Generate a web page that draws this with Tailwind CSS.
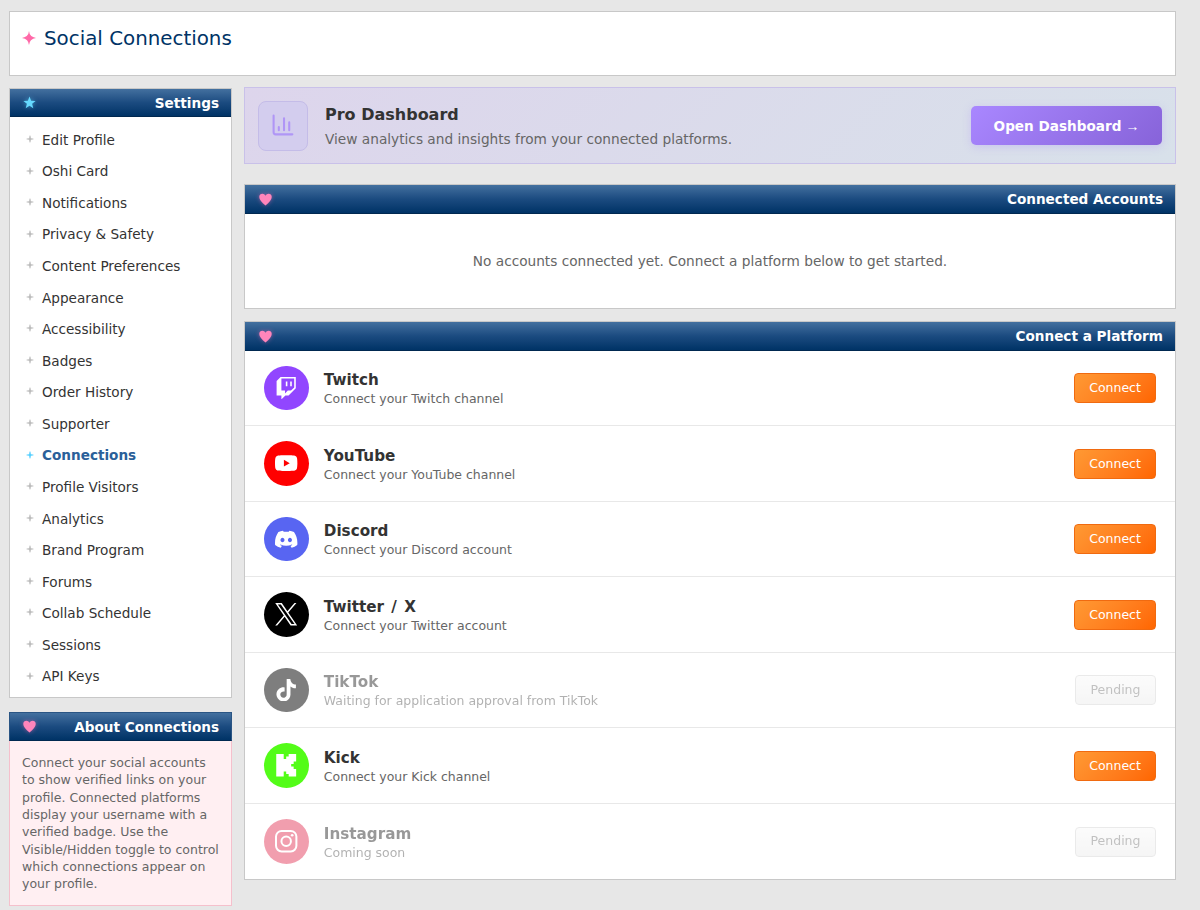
<!DOCTYPE html>
<html lang="en">
<head>
  <meta charset="UTF-8" />
  <title>Social Connections</title>
  <meta name="viewport" content="width=device-width, initial-scale=1.0" />
  <script src="https://cdn.jsdelivr.net/npm/@tailwindcss/browser@4"></script>
</head>
<body class="h-[910px] overflow-hidden bg-[#e7e7e7] pl-[9px] pr-6 pt-[11px] font-['DejaVu_Sans',Verdana,sans-serif] text-[#333]">
  <header class="flex h-[65px] gap-2 border border-[#c8c8c8] bg-white pl-3 pt-[11px]">
    <svg class="mt-2 h-[14px] w-[14px] fill-[#ff69a8]" viewBox="0 0 24 24"><path d="M12 0Q12.800 10 24 12Q12.800 14 12 24Q11.200 14 0 12Q11.200 10 12 0Z"/></svg>
    <h1 class="pt-px text-[19.850px] leading-[30px] text-[#003366]">Social Connections</h1>
  </header>

  <div class="mt-3 flex gap-3">
    <aside class="w-[223px] shrink-0">
      <section class="h-[610px] border border-[#c8c8c8] bg-white">
        <div class="flex h-7 items-center justify-between border-b border-[#002850] bg-linear-to-b from-[#43709f] via-[#1b4b80] to-[#003366] px-3">
          <svg class="ml-px h-[13px] w-[13px] fill-[#66d9ff] drop-shadow-[0_0_2px_rgba(102,217,255,0.5)]" viewBox="0 0 24 24"><path d="M12 1l3 7.800 8.300.4-6.500 5.200 2.200 8.100-7-4.600-7 4.600 2.200-8.100L.7 9.200 9 8.800z"/></svg>
          <h2 class="pt-px text-[13.600px] font-bold text-white">Settings</h2>
        </div>
        <nav id="settingsNav" class="pt-[7.200px]"></nav>
      </section>

      <section class="mt-[14px] h-[194px] border border-[#f5c0cc] bg-[#ffeff2]">
        <div class="-mx-px -mt-px flex h-[29px] items-center justify-between border border-[#2a5584] border-b-[#002850] bg-linear-to-b from-[#43709f] via-[#1b4b80] to-[#003366] px-3">
          <svg class="ml-px h-[13px] w-[13px] fill-[#ff85bb] drop-shadow-[0_0_2px_rgba(255,105,180,0.5)]" viewBox="0 0 24 24"><path d="M12 23C5 17 .5 13 .5 7.500 .5 0 9.500-.5 12 5 14.500-.5 23.500 0 23.500 7.500 23.500 13 19 17 12 23z"/></svg>
          <h2 class="pt-px text-[13.600px] font-bold text-white">About Connections</h2>
        </div>
        <p class="px-3 pt-[13px] text-[12.500px] leading-[17.350px] whitespace-nowrap text-[#666]">Connect your social accounts<br>to show verified links on your<br>profile. Connected platforms<br>display your username with a<br>verified badge. Use the<br>Visible/Hidden toggle to control<br>which connections appear on<br>your profile.</p>
      </section>
    </aside>

    <main class="w-[932px] shrink-0">
      <section class="-mt-px flex h-[77px] items-center border border-[#c9c1e9] bg-linear-135 from-[#ddd5ec] to-[#d8e1ea] px-[13px]">
        <div class="flex h-[50px] w-[50px] items-center justify-center rounded-lg border border-[#c4bce8] bg-[#d3cdee]">
          <svg class="h-[25px] w-[25px] fill-none stroke-[#b096f6] stroke-2" viewBox="0 0 24 24" stroke-linecap="round" stroke-linejoin="round"><path d="M2.500 2.500v16a2 2 0 0 0 2 2h16M7.500 16.500v-3M12.500 16.500V5M17.500 16.500V9"/></svg>
        </div>
        <div class="ml-[17px] flex-1 pt-[3px]">
          <h2 class="text-[16px] leading-6 font-bold">Pro Dashboard</h2>
          <p class="text-[13.700px] leading-[25px] text-[#666]">View analytics and insights from your connected platforms.</p>
        </div>
        <button class="flex h-[39px] w-[191px] items-center justify-center gap-1 rounded-[5px] bg-linear-135 from-[#a987ff] to-[#8763d9] text-[13.600px] font-bold text-white shadow-[0_2px_8px_rgba(167,139,250,0.3)]"><span class="pt-px">Open Dashboard</span><span class="pt-[2px] font-['Liberation_Sans',sans-serif] text-[14px] font-normal">→</span></button>
      </section>

      <section class="mt-5 h-[125px] border border-[#c8c8c8] bg-white">
        <div class="flex h-[29px] items-center justify-between border-b border-[#002850] bg-linear-to-b from-[#43709f] via-[#1b4b80] to-[#003366] px-3">
          <svg class="ml-[2px] h-[13px] w-[13px] fill-[#ff85bb] drop-shadow-[0_0_2px_rgba(255,105,180,0.5)]" viewBox="0 0 24 24"><path d="M12 23C5 17 .5 13 .5 7.500 .5 0 9.500-.5 12 5 14.500-.5 23.500 0 23.500 7.500 23.500 13 19 17 12 23z"/></svg>
          <h2 class="text-[13.600px] font-bold text-white">Connected Accounts</h2>
        </div>
        <p class="pt-[35px] text-center text-[13.680px] leading-6 text-[#666]">No accounts connected yet. Connect a platform below to get started.</p>
      </section>

      <section class="mt-3 h-[559px] border border-[#c8c8c8] bg-white">
        <div class="flex h-[29px] items-center justify-between border-b border-[#002850] bg-linear-to-b from-[#43709f] via-[#1b4b80] to-[#003366] px-3">
          <svg class="ml-[2px] h-[13px] w-[13px] fill-[#ff85bb] drop-shadow-[0_0_2px_rgba(255,105,180,0.5)]" viewBox="0 0 24 24"><path d="M12 23C5 17 .5 13 .5 7.500 .5 0 9.500-.5 12 5 14.500-.5 23.500 0 23.500 7.500 23.500 13 19 17 12 23z"/></svg>
          <h2 class="text-[13.600px] font-bold text-white">Connect a Platform</h2>
        </div>
        <div id="platformList" class="-mt-[0.300px]"></div>
      </section>
    </main>
  </div>

  <script>
    const navItems = [
      'Edit Profile', 'Oshi Card', 'Notifications', 'Privacy &amp; Safety', 'Content Preferences',
      'Appearance', 'Accessibility', 'Badges', 'Order History', 'Supporter', 'Connections',
      'Profile Visitors', 'Analytics', 'Brand Program', 'Forums', 'Collab Schedule', 'Sessions', 'API Keys'
    ];

    document.getElementById('settingsNav').innerHTML = navItems.map(item => {
      const active = item === 'Connections';
      return `
        <a class="flex h-[31.570px] items-center gap-2 pl-4 text-[13.600px] ${active ? 'font-bold text-[#2a6099]' : 'text-[#333]'}">
          <svg class="-mt-0.5 h-2 w-2 ${active ? 'fill-[#55cfff]' : 'fill-[#bbb]'}" viewBox="0 0 24 24"><path d="M12 0L14.500 9.500 24 12 14.500 14.500 12 24 9.500 14.500 0 12 9.500 9.500Z"/><path d="M11 2h2v20h-2zM2 11h20v2H2z"/></svg>
          <span>${item}</span>
        </a>`;
    }).join('');

    const platforms = [
      { name: 'Twitch', text: 'Connect your Twitch channel', bg: 'bg-[#9146ff]',
        icon: '<path d="M11.571 4.714h1.715v5.143H11.570zm4.715 0H18v5.143h-1.714zM6 0L1.714 4.286v15.428h5.143V24l4.286-4.286h3.428L22.286 12V0zm14.571 11.143l-3.428 3.428h-3.429l-3 3v-3H6.857V1.714h13.714Z"/>' },
      { name: 'YouTube', text: 'Connect your YouTube channel', bg: 'bg-[#ff0000]',
        icon: '<path d="M23.498 6.186a3.016 3.016 0 0 0-2.122-2.136C19.505 3.545 12 3.545 12 3.545s-7.505 0-9.377.505A3.017 3.017 0 0 0 .502 6.186C0 8.070 0 12 0 12s0 3.930.502 5.814a3.016 3.016 0 0 0 2.122 2.136c1.871.505 9.376.505 9.376.505s7.505 0 9.377-.505a3.015 3.015 0 0 0 2.122-2.136C24 15.930 24 12 24 12s0-3.930-.502-5.814zM9.545 15.568V8.432L15.818 12l-6.273 3.568z"/>' },
      { name: 'Discord', text: 'Connect your Discord account', bg: 'bg-[#5865f2]',
        icon: '<path d="M20.317 4.370a19.791 19.791 0 0 0-4.885-1.515.074.074 0 0 0-.079.037c-.21.375-.444.864-.608 1.250a18.270 18.270 0 0 0-5.487 0 12.640 12.640 0 0 0-.617-1.250.077.077 0 0 0-.079-.037A19.736 19.736 0 0 0 3.677 4.370a.07.07 0 0 0-.032.027C.533 9.046-.32 13.580.099 18.057a.082.082 0 0 0 .031.057 19.900 19.900 0 0 0 5.993 3.030.078.078 0 0 0 .084-.028 14.090 14.090 0 0 0 1.226-1.994.076.076 0 0 0-.041-.106 13.107 13.107 0 0 1-1.872-.892.077.077 0 0 1-.008-.128 10.200 10.200 0 0 0 .372-.292.074.074 0 0 1 .077-.010c3.928 1.793 8.180 1.793 12.062 0a.074.074 0 0 1 .078.010c.12.098.246.198.373.292a.077.077 0 0 1-.006.127 12.299 12.299 0 0 1-1.873.892.077.077 0 0 0-.041.107c.36.698.772 1.362 1.225 1.993a.076.076 0 0 0 .084.028 19.839 19.839 0 0 0 6.002-3.030.077.077 0 0 0 .032-.054c.5-5.177-.838-9.674-3.549-13.660a.061.061 0 0 0-.031-.030zM8.020 15.330c-1.183 0-2.157-1.085-2.157-2.419 0-1.333.956-2.419 2.157-2.419 1.210 0 2.176 1.096 2.157 2.420 0 1.333-.956 2.418-2.157 2.418zm7.975 0c-1.183 0-2.157-1.085-2.157-2.419 0-1.333.955-2.419 2.157-2.419 1.210 0 2.176 1.096 2.157 2.420 0 1.333-.946 2.418-2.157 2.418z"/>' },
      { name: 'Twitter / X', text: 'Connect your Twitter account', bg: 'bg-black',
        icon: '<path d="M14.234 10.162 22.977 0h-2.072l-7.591 8.824L7.251 0H.258l9.168 13.343L.258 24H2.330l8.016-9.318L16.749 24h6.993zm-2.837 3.299-.929-1.329L3.076 1.560h3.182l5.965 8.532.929 1.329 7.754 11.090h-3.182z"/>' },
      { name: 'TikTok', text: 'Waiting for application approval from TikTok', bg: 'bg-black', pending: true,
        icon: '<path d="M12.525.02c1.310-.020 2.610-.010 3.910-.020.08 1.530.63 3.090 1.750 4.170 1.120 1.110 2.700 1.620 4.240 1.790v4.030c-1.440-.050-2.890-.350-4.200-.970-.570-.260-1.100-.590-1.620-.930-.010 2.920.010 5.840-.020 8.750-.080 1.400-.540 2.790-1.350 3.940-1.310 1.920-3.580 3.170-5.910 3.210-1.430.08-2.860-.310-4.080-1.030-2.020-1.190-3.440-3.370-3.650-5.710-.020-.5-.030-1-.010-1.490.18-1.900 1.120-3.720 2.580-4.960 1.660-1.440 3.980-2.130 6.150-1.720.02 1.480-.040 2.960-.040 4.440-.990-.320-2.150-.230-3.020.37-.630.41-1.110 1.040-1.360 1.750-.210.51-.150 1.070-.140 1.610.24 1.640 1.820 3.020 3.500 2.870 1.120-.010 2.190-.660 2.770-1.610.19-.330.40-.670.41-1.060.10-1.790.06-3.570.07-5.360.01-4.030-.010-8.050.02-12.070z"/>' },
      { name: 'Kick', text: 'Connect your Kick channel', bg: 'bg-[#53fc18]',
        icon: '<path d="M1.333 0h8v5.333H12V2.667h2.667V0h8v8H20v2.667h-2.667v2.666H20V16h2.667v8h-8v-2.667H12v-2.666H9.333V24h-8Z"/>' },
      { name: 'Instagram', text: 'Coming soon', bg: 'bg-[#e4405f]', pending: true,
        icon: '<g fill="none" stroke="#fff" stroke-width="2.160"><rect x="1.080" y="1.080" width="21.840" height="21.840" rx="6"/><circle cx="12" cy="12" r="5.080"/></g><circle cx="18.406" cy="5.594" r="1.440"/>' }
    ];

    document.getElementById('platformList').innerHTML = platforms.map((p, i) => `
      <div class="flex h-[75.530px] items-center pl-[19px] pr-[19px] ${i < platforms.length - 1 ? 'border-b border-[#e8e8e8]' : ''}">
        <div class="flex h-[44.800px] w-[44.800px] items-center justify-center rounded-full ${p.bg} ${p.pending ? 'opacity-50' : ''}">
          <svg class="h-[22.400px] w-[22.400px] fill-white" viewBox="0 0 24 24">${p.icon}</svg>
        </div>
        <div class="ml-[15px] flex-1 pt-[2.500px] ${p.pending ? 'opacity-50' : ''}">
          <h3 class="text-[15.200px] leading-5 font-bold [word-spacing:2px]">${p.name}</h3>
          <p class="text-[12.480px] leading-[18px] text-[#666]">${p.text}</p>
        </div>
        ${p.pending
          ? '<button class="h-[30px] w-[81px] rounded-[4px] border border-[#ccc] bg-linear-to-b from-[#f8f8f8] to-[#e8e8e8] text-[12.500px] text-[#666] opacity-40">Pending</button>'
          : '<button class="mt-px h-[30px] w-[82px] rounded-[4px] border border-[#f06a10] bg-linear-135 from-[#ff9933] to-[#ff6600] text-[12.500px] text-white">Connect</button>'}
      </div>`).join('');
  </script>
</body>
</html>
